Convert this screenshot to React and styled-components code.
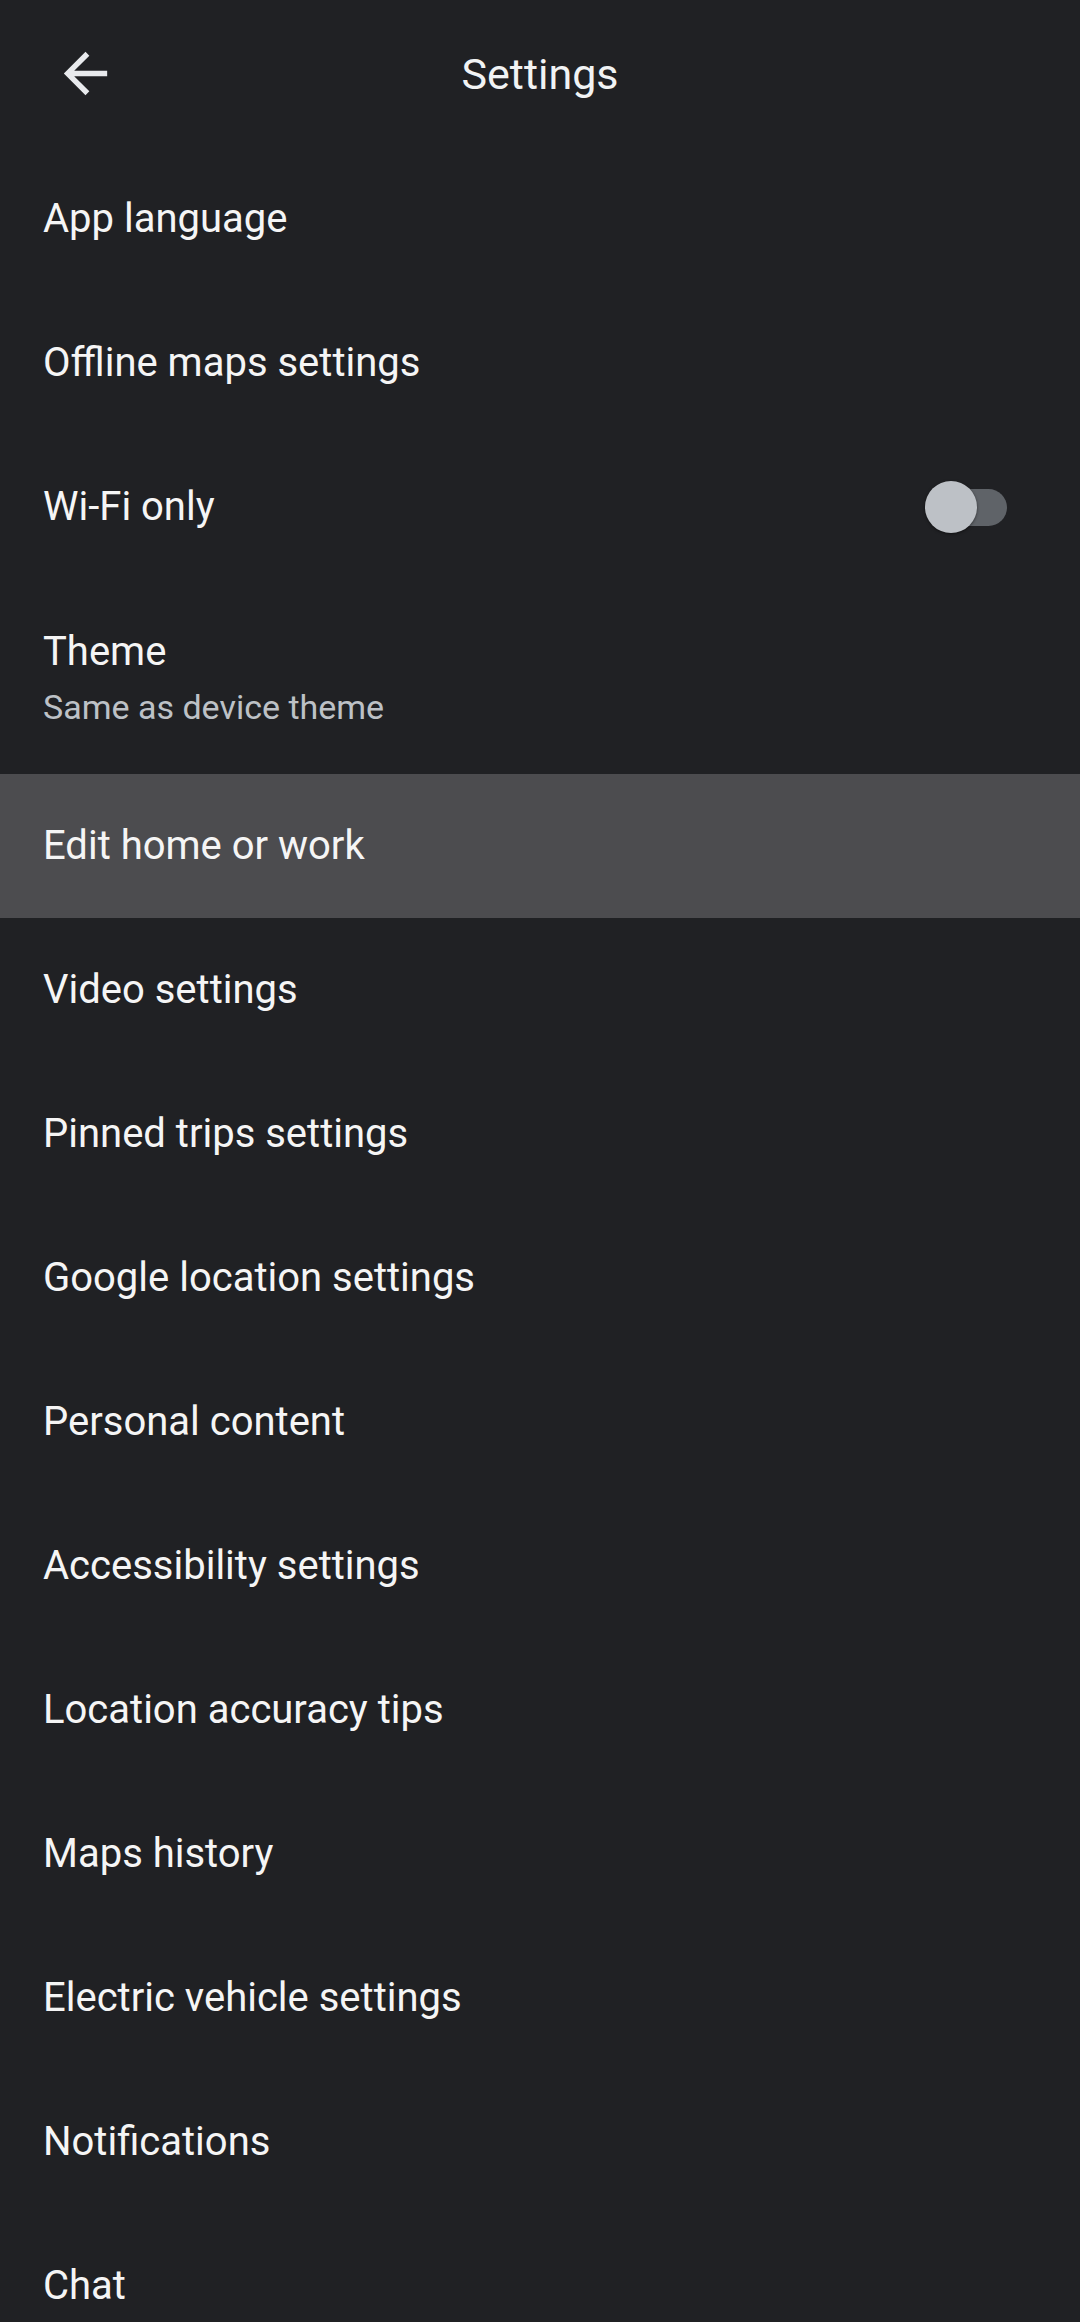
import React from 'react';
import styled, { createGlobalStyle } from 'styled-components';

const GlobalStyle = createGlobalStyle`
  html, body {
    margin: 0;
    padding: 0;
    background: #202124;
  }
  body {
    font-family: Roboto, "Noto Sans", "Liberation Sans", sans-serif;
    -webkit-font-smoothing: antialiased;
  }
`;

const Screen = styled.div`
  width: 1080px;
  min-height: 2322px;
  background: #202124;
  color: #f1f3f4;
  overflow: hidden;
`;

const Header = styled.header`
  height: 147px;
  display: grid;
  grid-template-columns: 170px 1fr 170px;
  align-items: center;
`;

const BackButton = styled.button`
  width: 100px;
  height: 100px;
  margin-left: 35px;
  border: none;
  background: transparent;
  padding: 0;
  display: flex;
  align-items: center;
  justify-content: center;
  color: #e8eaed;
`;

const Title = styled.h1`
  margin: 0;
  text-align: center;
  font-size: 43px;
  font-weight: 400;
  color: #f1f3f4;
`;

const List = styled.ul`
  list-style: none;
  margin: 0;
  padding: 0;
`;

const Row = styled.li`
  min-height: 144px;
  box-sizing: border-box;
  padding: ${p => (p.$tall ? '51px 73px 47px 43px' : '0 73px 0 43px')};
  display: flex;
  align-items: center;
  justify-content: space-between;
  background: ${p => (p.$active ? '#4c4c4f' : 'transparent')};
`;

const Texts = styled.div`
  display: flex;
  flex-direction: column;
  gap: 13px;
`;

const Label = styled.span`
  font-size: 40px;
  line-height: 44px;
  color: #f5f5f5;
`;

const Sub = styled.span`
  font-size: 34px;
  line-height: 40px;
  color: #bdc1c6;
`;

const Track = styled.div`
  position: relative;
  width: 82px;
  height: 37px;
  border-radius: 19px;
  background: #5f6368;
`;

const Thumb = styled.div`
  position: absolute;
  left: 0;
  top: 50%;
  width: 52px;
  height: 52px;
  margin-top: -26px;
  border-radius: 50%;
  background: #bdc1c6;
  box-shadow: 0 1px 3px rgba(0, 0, 0, 0.5);
`;

const ArrowBack = () => (
  <svg width="65" height="65" viewBox="0 0 24 24" fill="currentColor">
    <path d="M20 11H7.83l5.59-5.59L12 4l-8 8 8 8 1.41-1.41L7.83 13H20v-2z" />
  </svg>
);

const items = [
  { label: 'App language' },
  { label: 'Offline maps settings' },
  { label: 'Wi-Fi only', toggle: true },
  { label: 'Theme', sub: 'Same as device theme' },
  { label: 'Edit home or work', active: true },
  { label: 'Video settings' },
  { label: 'Pinned trips settings' },
  { label: 'Google location settings' },
  { label: 'Personal content' },
  { label: 'Accessibility settings' },
  { label: 'Location accuracy tips' },
  { label: 'Maps history' },
  { label: 'Electric vehicle settings' },
  { label: 'Notifications' },
  { label: 'Chat' },
];

export default function App() {
  return (
    <Screen>
      <GlobalStyle />
      <Header>
        <BackButton aria-label="Back">
          <ArrowBack />
        </BackButton>
        <Title>Settings</Title>
        <div />
      </Header>
      <List>
        {items.map(item => (
          <Row key={item.label} $tall={!!item.sub} $active={item.active}>
            <Texts>
              <Label>{item.label}</Label>
              {item.sub && <Sub>{item.sub}</Sub>}
            </Texts>
            {item.toggle && (
              <Track>
                <Thumb />
              </Track>
            )}
          </Row>
        ))}
      </List>
    </Screen>
  );
}
